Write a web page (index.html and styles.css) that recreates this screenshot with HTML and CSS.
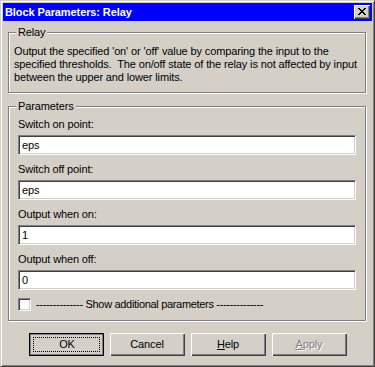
FILE: index.html
```html
<!DOCTYPE html>
<html>
<head>
<meta charset="utf-8">
<link rel="stylesheet" href="styles.css">
</head>
<body>
<div class="window">
  <div class="titlebar">
    <span class="title">Block Parameters: Relay</span>
    <span class="close"><svg width="8" height="7" viewBox="0 0 8 7"><path d="M0 0h2v1h-2zM6 0h2v1h-2zM1 1h2v1h-2zM5 1h2v1h-2zM2 2h4v1h-4zM3 3h2v1h-2zM2 4h4v1h-4zM1 5h2v1h-2zM5 5h2v1h-2zM0 6h2v1h-2zM6 6h2v1h-2z" fill="#000"/></svg></span>
  </div>
  <div class="content">
    <div class="group relay">
      <span class="legend">Relay</span>
      <p class="desc">Output the specified 'on' or 'off' value by comparing the input to the specified thresholds.&nbsp; The on/off state of the relay is not affected by input between the upper and lower limits.</p>
    </div>
    <div class="group params">
      <span class="legend">Parameters</span>
      <div class="field">
        <div class="label">Switch on point:</div>
        <div class="input">eps</div>
      </div>
      <div class="field">
        <div class="label">Switch off point:</div>
        <div class="input">eps</div>
      </div>
      <div class="field">
        <div class="label">Output when on:</div>
        <div class="input">1</div>
      </div>
      <div class="field">
        <div class="label">Output when off:</div>
        <div class="input">0</div>
      </div>
      <div class="check-row">
        <span class="checkbox"></span>
        <span class="check-label">-------------- Show additional parameters --------------</span>
      </div>
    </div>
    <div class="buttons">
      <div class="btn default"><span class="focus">OK</span></div>
      <div class="btn">Cancel</div>
      <div class="btn"><span><u>H</u>elp</span></div>
      <div class="btn disabled"><span><u>A</u>pply</span></div>
    </div>
  </div>
</div>
</body>
</html>
```

FILE: styles.css
```css
html, body {
  margin: 0;
  padding: 0;
  background: #d4d0c8;
}
body {
  font-family: "Liberation Sans", Arial, sans-serif;
  font-size: 11px;
  letter-spacing: -0.13px;
  color: #000;
}
.window {
  box-sizing: border-box;
  width: 375px;
  height: 367px;
  background: #d4d0c8;
  border: 1px solid;
  border-color: #d4d0c8 #404040 #404040 #d4d0c8;
  box-shadow: inset 1px 1px 0 #fff, inset -1px -1px 0 #808080;
  padding: 2px;
  display: flex;
  flex-direction: column;
}
.titlebar {
  height: 18px;
  background: #0000ff;
  color: #fff;
  display: flex;
  align-items: center;
  justify-content: space-between;
  padding: 0 2px 0 2px;
}
.title {
  font-weight: bold;
  font-size: 11px;
  line-height: 18px;
  letter-spacing: -0.1px;
}
.close {
  box-sizing: border-box;
  width: 16px;
  height: 14px;
  background: #d4d0c8;
  box-shadow: inset 1px 1px 0 #fff, inset -1px -1px 0 #404040, inset -2px -2px 0 #808080;
  display: flex;
  align-items: center;
  justify-content: center;
  padding: 0 1px 1px 0;
}
.close svg {
  display: block;
}
.content {
  padding: 11px 6px 0 5px;
  display: flex;
  flex-direction: column;
}
.group {
  position: relative;
  box-sizing: border-box;
  width: 358px;
  border: 1px solid #808080;
  box-shadow: 1px 1px 0 #fff, inset 1px 1px 0 #fff;
}
.legend {
  position: absolute;
  top: -7px;
  left: 7px;
  padding: 0 2px;
  background: #d4d0c8;
  line-height: 13px;
}
.relay {
  padding: 12px 8px 8px 5px;
}
.desc {
  margin: 0;
  line-height: 13px;
}
.params {
  margin-top: 13px;
  padding: 11px 9px 9px 9px;
  display: flex;
  flex-direction: column;
  gap: 8px;
}
.field {
  display: flex;
  flex-direction: column;
  gap: 4px;
}
.label {
  line-height: 13px;
}
.input {
  box-sizing: border-box;
  height: 20px;
  background: #fff;
  border: 1px solid;
  border-color: #808080 #fff #fff #808080;
  box-shadow: inset 1px 1px 0 #404040, inset -1px -1px 0 #d4d0c8;
  padding: 2px 3px 0 3px;
  line-height: 15px;
}
.check-row {
  display: flex;
  align-items: center;
  gap: 5px;
  height: 13px;
}
.checkbox {
  box-sizing: border-box;
  width: 13px;
  height: 13px;
  background: #fff;
  border: 1px solid;
  border-color: #808080 #fff #fff #808080;
  box-shadow: inset 1px 1px 0 #404040, inset -1px -1px 0 #d4d0c8;
}
.check-label {
  line-height: 13px;
  letter-spacing: -0.32px;
}
.buttons {
  margin-top: 12px;
  display: flex;
  justify-content: center;
  gap: 6px;
  padding-left: 1px;
}
.btn {
  box-sizing: border-box;
  width: 75px;
  height: 23px;
  display: flex;
  align-items: center;
  justify-content: center;
  box-shadow: inset 1px 1px 0 #fff, inset -1px -1px 0 #404040, inset -2px -2px 0 #808080;
  line-height: 13px;
}
.btn.default {
  border: 1px solid #000;
  box-shadow: inset 1px 1px 0 #808080, inset -1px -1px 0 #808080;
  padding: 3px;
}
.btn.default .focus {
  box-sizing: border-box;
  width: 100%;
  height: 100%;
  border: 1px dotted #000;
  display: flex;
  align-items: center;
  justify-content: center;
  padding-left: 2px;
}
.btn.disabled {
  color: #808080;
  text-shadow: 1px 1px 0 #fff;
}
u {
  text-decoration: underline;
}
```
